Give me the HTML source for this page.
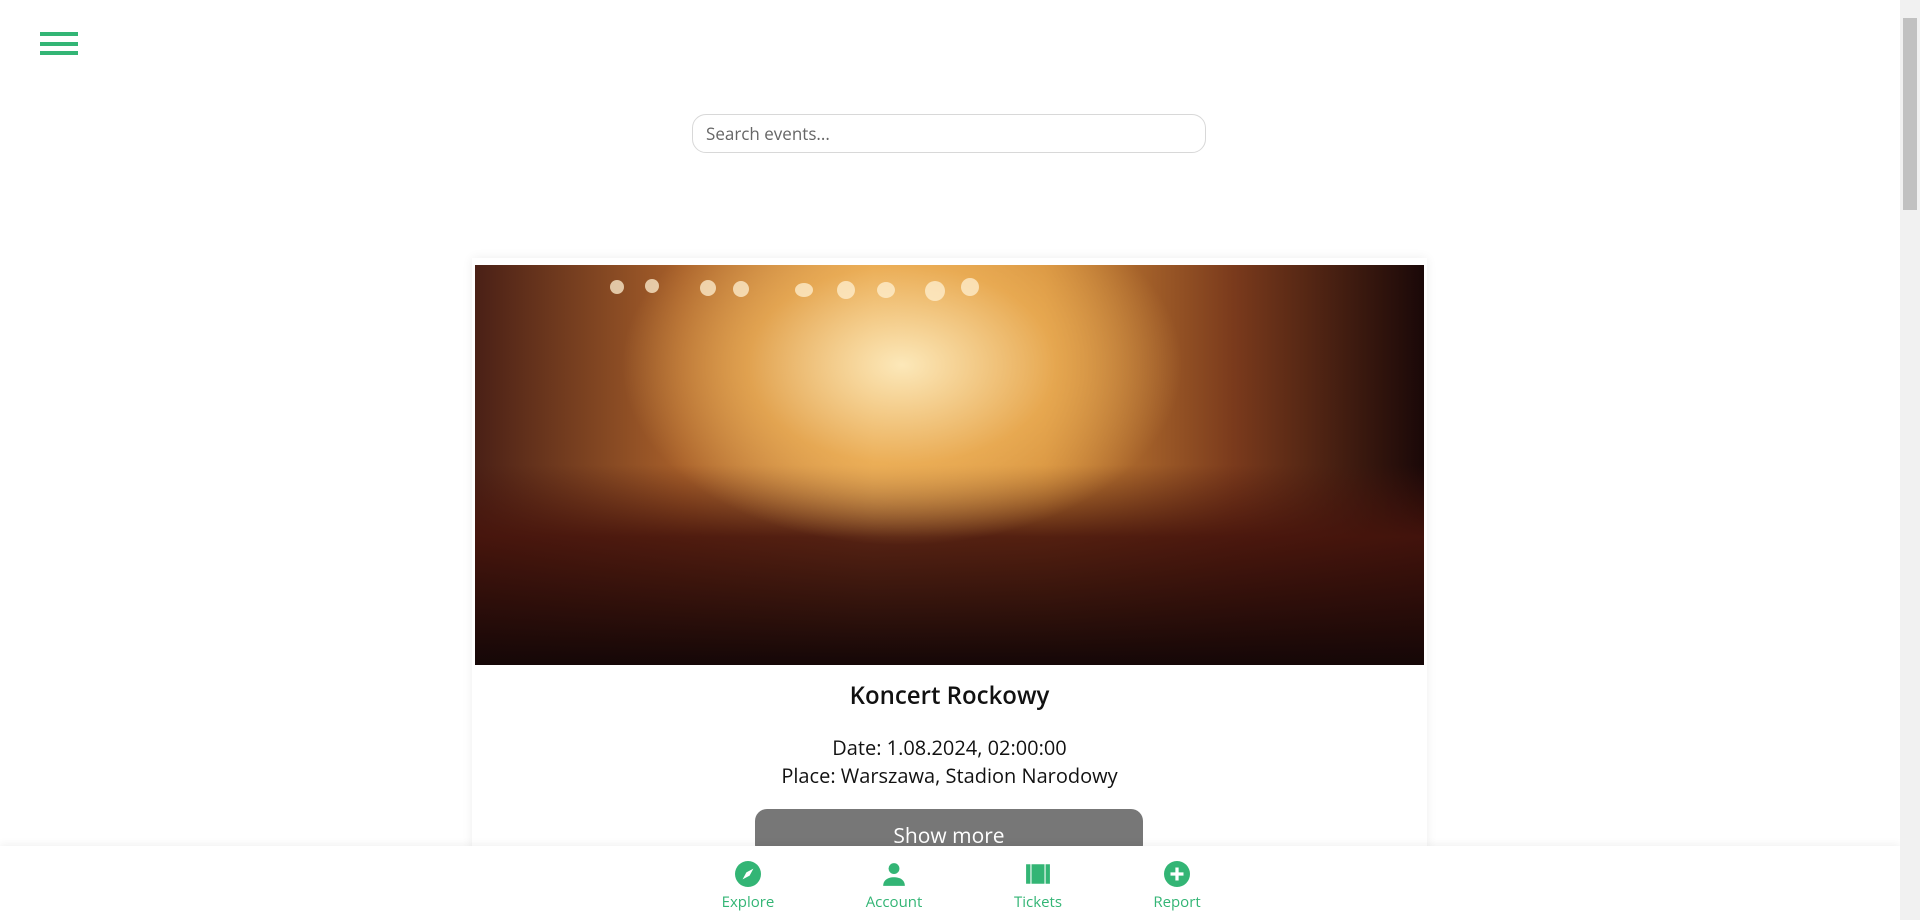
<!DOCTYPE html>
<html style="overflow:hidden;height:920px"><head><style>
body{margin:0;width:1920px;height:920px;overflow:hidden;background:#fff;font-family:"Open Sans","Liberation Sans",sans-serif;position:relative}
.hb{position:absolute;left:40px;width:38px;height:4px;background:#33b575}
.search{position:absolute;left:692px;top:114px;width:514px;height:39px;border:1px solid #d8d8d8;border-radius:14px;box-sizing:border-box;padding-left:13px;font-size:17px;line-height:37px;color:#666}
.card{position:absolute;left:472px;top:258px;width:955px;height:662px;box-shadow:0 0 10px rgba(0,0,0,.07);background:#fff}
.img{position:absolute;left:475px;top:265px;width:949px;height:400px;overflow:hidden;
background:
radial-gradient(ellipse 280px 180px at 45% 25%,rgba(252,232,185,1),rgba(240,180,90,.7) 55%,rgba(0,0,0,0) 100%),
linear-gradient(180deg,rgba(0,0,0,0) 0%,rgba(0,0,0,0) 50%,rgba(70,20,12,.9) 68%,#150707 100%),
linear-gradient(90deg,#4a2016 0%,#a8602a 22%,#e0a050 42%,#d08a38 60%,#7a3a1c 80%,#1a0808 100%);}
.dot{position:absolute;border-radius:50%;background:rgba(255,240,210,.75)}
.t{position:absolute;left:475px;width:949px;text-align:center;color:#111}
.btn{position:absolute;left:755px;top:809px;width:388px;height:48px;background:#777;border-radius:12px;color:#fff;font-size:21px;text-align:center;line-height:54px}
.nav{position:absolute;left:0;top:846px;width:1900px;height:74px;background:#fff;box-shadow:0 -2px 8px rgba(0,0,0,.06)}
.it{position:absolute;top:15px;width:120px;margin-left:-60px;text-align:center;color:#33b575;font-size:15px}
.it svg{display:block;margin:0 auto 5px}
.sb{position:absolute;right:0;top:0;width:20px;height:920px;background:#f1f1f1}
.th{position:absolute;right:3px;top:18px;width:14px;height:192px;background:#c1c1c1}
</style></head><body>
<div class="hb" style="top:32px"></div><div class="hb" style="top:42px"></div><div class="hb" style="top:51px"></div>
<div class="search">Search events...</div>
<div class="card"></div>
<div class="img">
<div class="dot" style="left:135px;top:15px;width:14px;height:14px"></div>
<div class="dot" style="left:170px;top:14px;width:14px;height:14px"></div>
<div class="dot" style="left:225px;top:15px;width:16px;height:16px"></div>
<div class="dot" style="left:258px;top:16px;width:16px;height:16px"></div>
<div class="dot" style="left:320px;top:18px;width:18px;height:14px"></div>
<div class="dot" style="left:362px;top:16px;width:18px;height:18px"></div>
<div class="dot" style="left:402px;top:17px;width:18px;height:16px"></div>
<div class="dot" style="left:450px;top:16px;width:20px;height:20px"></div>
<div class="dot" style="left:486px;top:13px;width:18px;height:18px"></div>
</div>
<div class="t" style="top:679px;font-size:24px;font-weight:600">Koncert Rockowy</div>
<div class="t" style="top:734px;font-size:20px;line-height:28px">Date: 1.08.2024, 02:00:00<br>Place: Warszawa, Stadion Narodowy</div>
<div class="btn">Show more</div>
<div class="nav">
<div class="it" style="left:748px"><svg width="26" height="26" viewBox="0 0 24 24"><circle cx="12" cy="12" r="12" fill="#33b575"/><path d="M17 7L13.5 13.5 7 17 10.5 10.5Z" fill="#fff"/></svg>Explore</div>
<div class="it" style="left:894px"><svg width="26" height="26" viewBox="0 0 24 24"><circle cx="12" cy="7" r="5" fill="#33b575"/><path d="M2 23c0-6 5-8 10-8s10 2 10 8z" fill="#33b575"/></svg>Account</div>
<div class="it" style="left:1038px"><svg width="26" height="26" viewBox="0 0 24 24"><rect x="1" y="3" width="4" height="18" fill="#33b575"/><rect x="6" y="3" width="12" height="18" fill="#33b575"/><rect x="19" y="3" width="4" height="18" fill="#33b575"/></svg>Tickets</div>
<div class="it" style="left:1177px"><svg width="26" height="26" viewBox="0 0 24 24"><circle cx="12" cy="12" r="12" fill="#33b575"/><path d="M12 6v12M6 12h12" stroke="#fff" stroke-width="3"/></svg>Report</div>
</div>
<div class="sb"><div class="th"></div></div>
</body></html>
